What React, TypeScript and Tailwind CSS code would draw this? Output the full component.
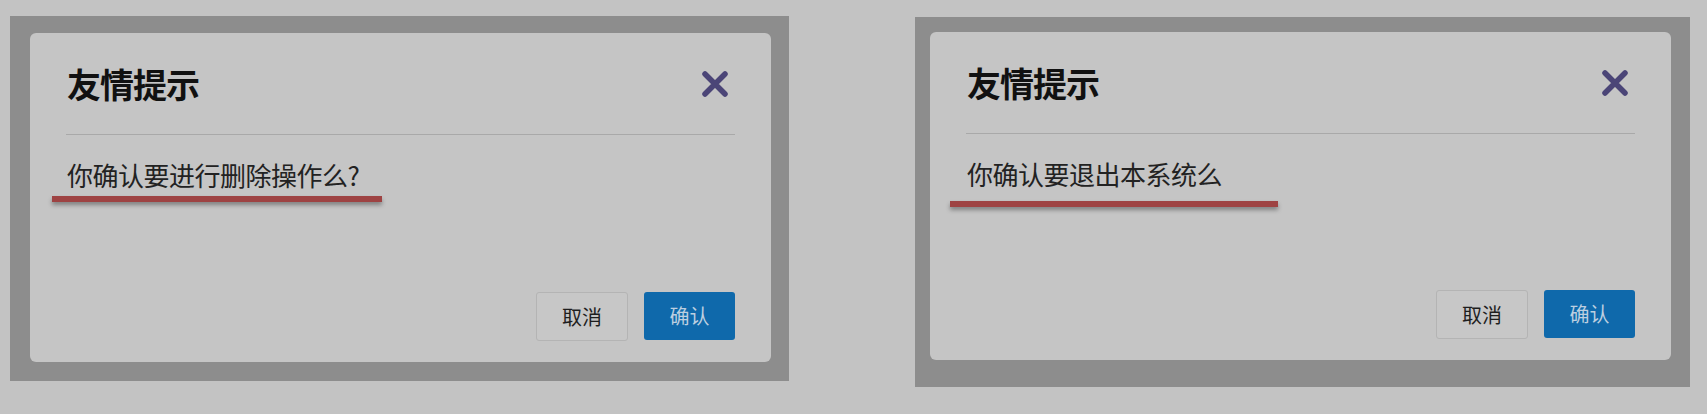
import React from "react";

const CJK = { fontFamily: '"Noto Sans CJK SC", "Noto Sans", sans-serif' };

function CloseIcon() {
  return (
    <svg width="30" height="30" viewBox="0 0 30 30" className="mr-[5px]">
      <path d="M5 5 L25 25 M25 5 L5 25" stroke="#4b4577" strokeWidth="5.5" strokeLinecap="round" fill="none" />
    </svg>
  );
}

type DialogProps = {
  text: string;
  barLeft: string;
  barWidth: string;
  barTop: string;
  height: string;
};

function Dialog({ text, barLeft, barWidth, barTop, height }: DialogProps) {
  return (
    <div className={`w-[741px] ${height} bg-[#c5c5c5] rounded-[6px] flex flex-col px-[36px] pt-[31px] pb-[21px]`} style={CJK}>
      <div className="flex items-center justify-between h-[40px] pl-[1px]">
        <span className="text-[34px] leading-[40px] font-bold tracking-[-1px] text-[#111]">友情提示</span>
        <CloseIcon />
      </div>
      <div className="mt-[30px] h-px bg-[#a9a9a9]" />
      <div className="mt-[22px] pl-[1px] text-[26px] leading-[36px] tracking-[-0.5px] text-[#222]">{text}</div>
      <div className={`${barTop} ${barLeft} ${barWidth} h-[6px] bg-[#9e4343] shadow-[0_3px_4px_rgba(0,0,0,0.35)]`} />
      <div className="mt-auto flex justify-end gap-[16px]">
        <button className="w-[92px] h-[49px] rounded-[3px] border border-[#b4b4b4] bg-[#c7c7c7] text-[20px] text-[#1e1e1e]">取消</button>
        <button className="w-[91px] h-[48px] rounded-[3px] bg-[#0f69ab] text-[20px] text-[#bccfe0]">确认</button>
      </div>
    </div>
  );
}

export default function App() {
  return (
    <div className="w-[1707px] h-[414px] bg-[#c3c3c3] flex items-start overflow-hidden">
      <div className="ml-[10px] mt-[16px] w-[779px] h-[365px] bg-[#8d8d8d] pl-[20px] pt-[17px]">
        <Dialog
          text="你确认要进行删除操作么?"
          barLeft="-ml-[14px]"
          barWidth="w-[330px]"
          barTop="mt-[3px]"
          height="h-[329px]"
        />
      </div>
      <div className="ml-[126px] mt-[17px] w-[775px] h-[370px] bg-[#8d8d8d] pl-[15px] pt-[15px]">
        <Dialog
          text="你确认要退出本系统么"
          barLeft="-ml-[16px]"
          barWidth="w-[328px]"
          barTop="mt-[9px]"
          height="h-[328px]"
        />
      </div>
    </div>
  );
}
